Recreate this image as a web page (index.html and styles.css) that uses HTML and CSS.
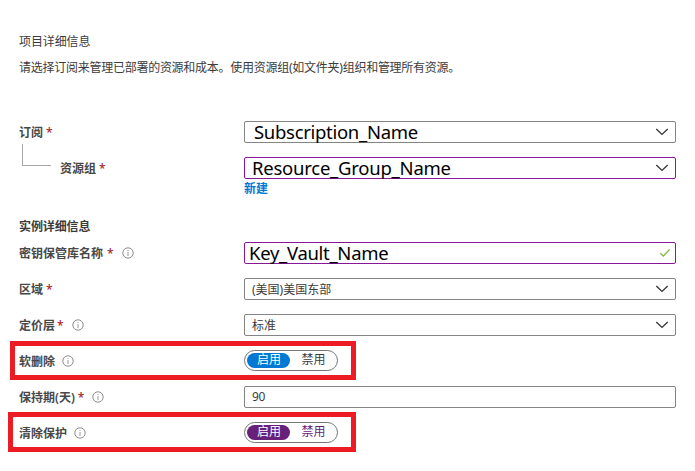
FILE: index.html
```html
<!DOCTYPE html>
<html lang="zh-CN">
<head>
<meta charset="utf-8">
<title>创建密钥保管库</title>
<link rel="stylesheet" href="styles.css">
</head>
<body>
<svg class="defs" width="0" height="0">
  <symbol id="info" viewBox="0 0 12 12"><circle cx="6" cy="6" r="5.2" fill="none" stroke="#707070" stroke-width="0.8"/><path d="M6 5v4M6 3v1" stroke="#808080" stroke-width="0.8"/></symbol>
  <symbol id="chevron" viewBox="0 0 14 8"><path d="M1.3 1 7 6.5 12.7 1" fill="none" stroke="#333" stroke-width="1.25"/></symbol>
  <symbol id="check" viewBox="0 0 12 10"><path d="M1.3 5.2 4.4 8 10.7 1.4" fill="none" stroke="#7db83f" stroke-width="1.3"/></symbol>
</svg>
<main class="form">
  <h2 class="title">项目详细信息</h2>
  <p class="intro">请选择订阅来管理已部署的资源和成本。使用资源组(如文件夹)组织和管理所有资源。</p>

  <section class="project">
    <div class="row">
      <div class="label"><span>订阅</span><b class="req">*</b></div>
      <div class="field"><span class="big sub">Subscription_Name</span><svg class="chevron"><use href="#chevron"/></svg></div>
    </div>
    <div class="row">
      <div class="label"><i class="branch"></i><span>资源组</span><b class="req">*</b></div>
      <div class="field changed"><span class="big group">Resource_Group_Name</span><svg class="chevron"><use href="#chevron"/></svg></div>
    </div>
    <a class="new">新建</a>
  </section>

  <h3 class="subtitle">实例详细信息</h3>
  <section>
    <div class="row">
      <div class="label"><span>密钥保管库名称</span><b class="req wide">*</b><svg class="info"><use href="#info"/></svg></div>
      <div class="field changed"><span class="big vault">Key_Vault_Name</span><svg class="check"><use href="#check"/></svg></div>
    </div>
    <div class="row">
      <div class="label"><span>区域</span><b class="req">*</b></div>
      <div class="field"><span class="value">(美国)美国东部</span><svg class="chevron"><use href="#chevron"/></svg></div>
    </div>
    <div class="row">
      <div class="label"><span>定价层</span><b class="req tight">*</b><svg class="info"><use href="#info"/></svg></div>
      <div class="field"><span class="value">标准</span><svg class="chevron"><use href="#chevron"/></svg></div>
    </div>
    <div class="row soft">
      <div class="label"><span>软删除</span><svg class="info"><use href="#info"/></svg></div>
      <div class="toggle"><span class="on">启用</span><span class="off">禁用</span></div>
    </div>
    <div class="row">
      <div class="label"><span>保持期(天)</span><b class="req">*</b><svg class="info"><use href="#info"/></svg></div>
      <div class="field"><span class="value number">90</span></div>
    </div>
    <div class="row purge">
      <div class="label"><span>清除保护</span><svg class="info"><use href="#info"/></svg></div>
      <div class="toggle purple"><span class="on">启用</span><span class="off">禁用</span></div>
    </div>
  </section>
</main>
</body>
</html>
```
FILE: styles.css
```css
*, *::before { box-sizing: border-box; }
body {
  margin: 0;
  background: #fff;
  color: #3b3b3b;
  font: 12px/18px "Noto Sans", "Noto Sans CJK SC", sans-serif;
}
.defs { display: block; }
.form { width: 676px; min-height: 471px; padding: 33px 0 0 19px; }
.title, .intro, .subtitle { margin: 0; font-size: 12px; font-weight: 400; }
.title { height: 18px; letter-spacing: -0.1px; }
.intro { margin-top: 8px; height: 18px; letter-spacing: -0.26px; white-space: nowrap; }
.project { margin-top: 37px; }
.row {
  position: relative;
  display: grid;
  grid-template-columns: 225px 432px;
  align-items: center;
  height: 36px;
}
.label {
  display: flex;
  align-items: center;
  padding-top: 1px;
  color: #484848;
  font-weight: 600;
  white-space: nowrap;
}
.req { margin-left: 3px; color: #a4262c; font-size: 12px; font-weight: 500; line-height: 18px; }
.req.wide { margin-left: 4px; }
.req.tight { margin-left: 2px; }
.info { width: 12px; height: 12px; margin: -1px 0 0 8px; }
.label span + .info { margin-left: 7px; }
.branch {
  width: 29px;
  height: 22px;
  margin: -28px 9px 0 3px;
  border: solid #a6a6a6;
  border-width: 0 0 1px 1px;
}
.field {
  display: flex;
  align-items: center;
  justify-content: space-between;
  height: 22px;
  padding: 0 7px;
  border: 1px solid #858585;
  border-radius: 2px;
}
.changed { border-color: #881798; }
.value { padding-top: 1px; }
.number { padding-top: 0; letter-spacing: -0.3px; }
.chevron { width: 14px; height: 8px; margin-right: -1px; }
.check { width: 12px; height: 10px; margin-right: -3px; }
.big { color: #000; font-size: 18.5px; line-height: 20px; letter-spacing: -0.3px; white-space: nowrap; }
.sub { margin-left: 2px; }
.group { letter-spacing: -0.24px; }
.vault { margin-left: -3px; }
.new { display: block; height: 18px; margin: -6px 0 0 225px; color: #0078d4; font-weight: 600; }
.subtitle { height: 18px; margin: 20px 0 -1px; font-weight: 600; letter-spacing: -0.1px; }
.toggle {
  display: flex;
  align-items: center;
  width: 94px;
  height: 21px;
  padding: 0 2px;
  margin-top: -1px;
  border: 1px solid #767676;
  border-radius: 11px;
}
.toggle span { width: 44px; height: 15px; line-height: 14px; text-align: center; }
.toggle .on { padding-left: 1px; background: #0078d4; border-radius: 8px; color: #fff; }
.toggle .off { width: 46px; padding-left: 2px; }
.purple .on { background: #68217a; }
.purple .off { color: #68217a; }
.soft::before, .purge::before {
  content: "";
  position: absolute;
  border: 5px solid #ed1c24;
}
.soft::before { left: -9px; top: -2px; width: 346px; height: 39px; }
.purge::before { left: -11px; top: -3px; width: 348px; height: 40px; }
```
